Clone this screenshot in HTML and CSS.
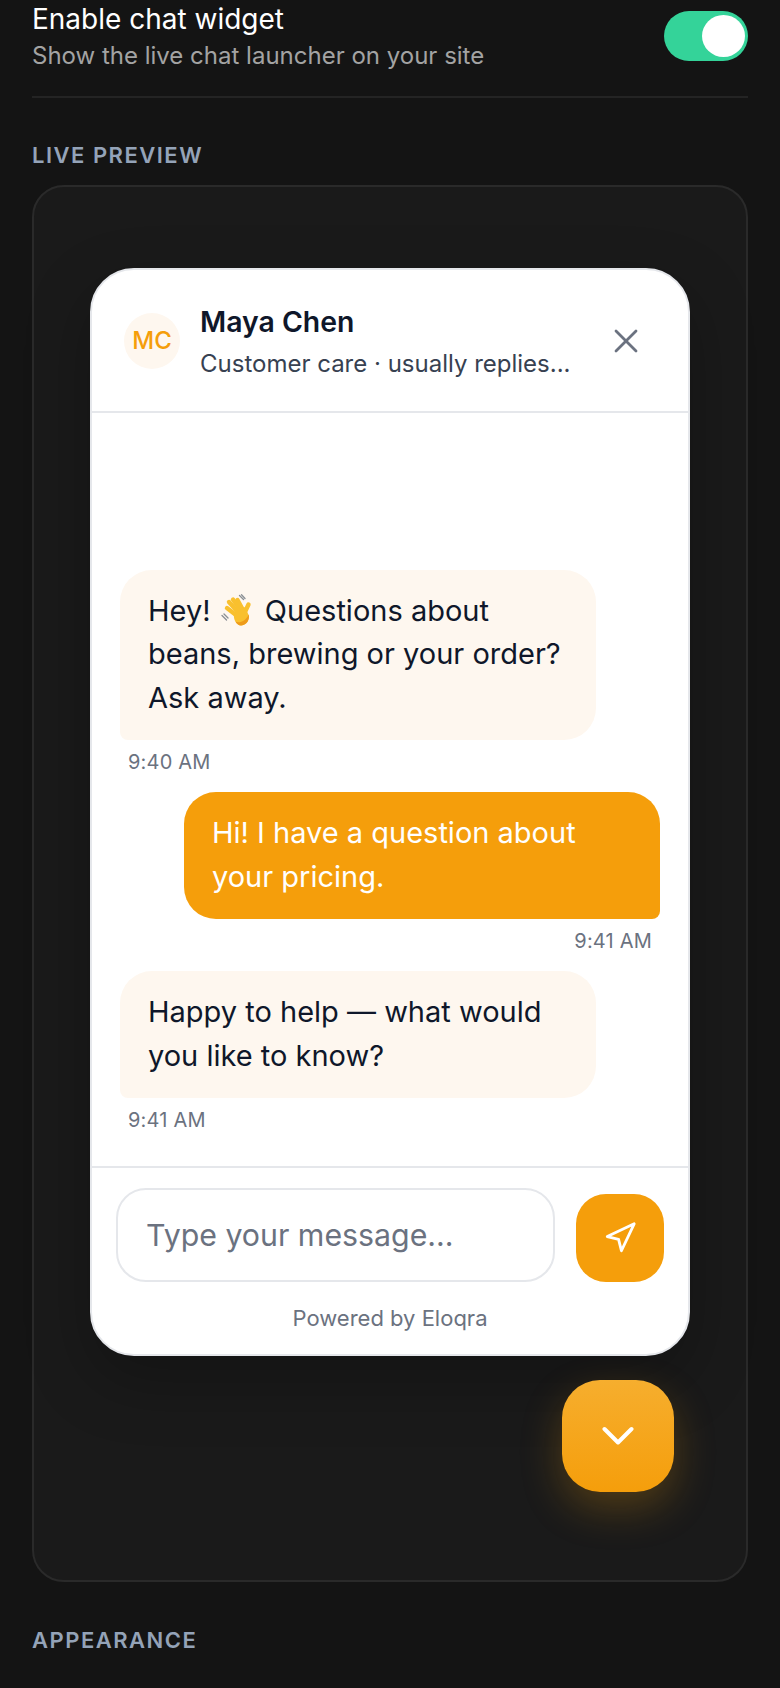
FILE: index.html
```html
<!DOCTYPE html>
<html lang="en">
<head>
    <meta charset="UTF-8">
    <meta name="viewport" content="width=device-width, initial-scale=1.0">
    <title>Chat widget settings</title>
    <link rel="stylesheet" href="styles.css">
</head>
<body>

    <div class="setting-row">
        <div class="setting-text">
            <div class="setting-title">Enable chat widget</div>
            <div class="setting-sub">Show the live chat launcher on your site</div>
        </div>
        <div class="toggle"><div class="toggle-knob"></div></div>
    </div>

    <div class="section-label">LIVE PREVIEW</div>

    <div class="preview">
        <div class="chat-card">
            <div class="chat-header">
                <div class="avatar">MC</div>
                <div class="agent">
                    <div class="agent-name">Maya Chen</div>
                    <div class="agent-role">Customer care · usually replies...</div>
                </div>
                <svg class="close-icon" viewBox="0 0 24 24" fill="none" stroke="#6b7280" stroke-width="2.800" stroke-linecap="round">
                    <path d="M2 2 22 22"/>
                    <path d="M22 2 2 22"/>
                </svg>
            </div>

            <div class="messages">
                <div class="msg msg-in">
                    <div class="bubble">Hey! <svg class="wave" viewBox="0 0 32 32">
                        <g fill="none" stroke="#f9c02e" stroke-width="4.400" stroke-linecap="round">
                            <path d="M6 14 15 21"/>
                            <path d="M8 8 17 18"/>
                            <path d="M12 5.500 20 17"/>
                            <path d="M16.500 6 22 16"/>
                            <path d="M27.500 10.500 23 20"/>
                        </g>
                        <path fill="#f9c02e" d="M13 20 24 13 28 22C28 28 24 31.500 20 31.500 16 31.500 12 26 13 20Z"/>
                        <path fill="#ee9b1b" d="M28 22C28 28 24 31.500 20 31.500 17.500 31.500 15.500 29.500 14.500 27.500 18 29.500 24 28 27.800 20.500Z"/>
                        <path fill="none" stroke="#8a8f94" stroke-width="1.300" stroke-linecap="round" d="M1 21.500 5.500 26M3 20 7 24M18.500 1.500 22.500 5.500M20.500 0.800 24 4.500"/>
                    </svg> Questions about beans, brewing or your order? Ask away.</div>
                    <div class="msg-time">9:40 AM</div>
                </div>
                <div class="msg msg-out">
                    <div class="bubble">Hi! I have a question about your pricing.</div>
                    <div class="msg-time">9:41 AM</div>
                </div>
                <div class="msg msg-in">
                    <div class="bubble">Happy to help — what would you like to know?</div>
                    <div class="msg-time">9:41 AM</div>
                </div>
            </div>

            <div class="chat-footer">
                <div class="composer">
                    <div class="message-input">Type your message...</div>
                    <div class="send-btn">
                        <svg class="send-icon" viewBox="0 0 24 24" fill="none" stroke="#fff" stroke-width="2" stroke-linejoin="round" stroke-linecap="round">
                            <polygon points="3 11 22 2 13 21 11 13 3 11"/>
                        </svg>
                    </div>
                </div>
                <div class="powered">Powered by Eloqra</div>
            </div>
        </div>

        <div class="launcher">
            <svg class="chevron" viewBox="0 0 32 20" fill="none" stroke="#fff" stroke-width="4" stroke-linecap="round" stroke-linejoin="round">
                <path d="M2.500 3 16 16.500 29.500 3"/>
            </svg>
        </div>
    </div>

    <div class="section-label section-label-next">APPEARANCE</div>

</body>
</html>
```

FILE: styles.css
```css
body {
    margin: 0;
    height: 1688px;
    box-sizing: border-box;
    padding: 0 32px;
    background-color: #141414;
    color: white;
    font-family: Inter, "Liberation Sans", sans-serif;
    overflow: hidden;
}

.setting-row {
    display: flex;
    justify-content: space-between;
    align-items: center;
    height: 98px;
    padding-bottom: 24px;
    box-sizing: border-box;
    border-bottom: 2px solid #242424;
}
.setting-title {
    font-size: 28px;
    line-height: 36px;
    color: #ffffff;
}
.setting-sub {
    font-size: 24px;
    line-height: 32px;
    margin-top: 3px;
    color: #a3a3a3;
}

.toggle {
    position: relative;
    width: 84px;
    height: 50px;
    border-radius: 25px;
    background-color: #34d399;
}
.toggle-knob {
    position: absolute;
    top: 4px;
    right: 3px;
    width: 43px;
    height: 42px;
    border-radius: 50%;
    background-color: white;
}

.section-label {
    margin-top: 43px;
    font-size: 22px;
    line-height: 28px;
    font-weight: 600;
    letter-spacing: 1.500px;
    color: #94a3b8;
}
.section-label-next {
    margin-top: 44px;
}

.preview {
    display: flex;
    flex-direction: column;
    margin-top: 16px;
    height: 1397px;
    padding-top: 81px;
    box-sizing: border-box;
    background-color: #1a1a1a;
    border: 2px solid #2a2a2a;
    border-radius: 32px;
}

.chat-card {
    display: flex;
    flex-direction: column;
    align-self: center;
    width: 600px;
    height: 1088px;
    box-sizing: border-box;
    background-color: white;
    border: 2px solid #e5e7eb;
    border-radius: 44px;
    box-shadow: 0 24px 64px rgba(0, 0, 0, 0.25);
    overflow: hidden;
}

.chat-header {
    display: flex;
    align-items: center;
    height: 143px;
    flex-shrink: 0;
    padding: 0 50px 0 32px;
    box-sizing: border-box;
    border-bottom: 2px solid #e5e7eb;
}
.avatar {
    display: flex;
    justify-content: center;
    align-items: center;
    width: 56px;
    height: 56px;
    flex-shrink: 0;
    border-radius: 50%;
    background-color: #fef7ef;
    color: #f59e0b;
    font-size: 24px;
    font-weight: 500;
}
.agent {
    flex: 1;
    margin-left: 20px;
    padding-top: 3px;
}
.agent-name {
    font-size: 28.400px;
    line-height: 36px;
    font-weight: 600;
    color: #0f172a;
}
.agent-role {
    margin-top: 8px;
    font-size: 24px;
    line-height: 32px;
    color: #374151;
}
.close-icon {
    width: 24px;
    height: 24px;
    flex-shrink: 0;
}

.messages {
    flex: 1;
    display: flex;
    flex-direction: column;
    justify-content: flex-end;
    gap: 17px;
    padding: 0 28px 33px 28px;
}
.msg {
    display: flex;
    flex-direction: column;
}
.msg-out {
    align-items: flex-end;
}
.bubble {
    width: 476px;
    box-sizing: border-box;
    padding: 19px 28px 21px;
    font-size: 29px;
    line-height: 43.500px;
}
.msg-in .bubble {
    background-color: #fef7ef;
    color: #0f172a;
    border-radius: 32px 32px 32px 8px;
}
.msg-out .bubble {
    background-color: #f59e0b;
    color: white;
    border-radius: 32px 32px 8px 32px;
}
.wave {
    width: 32px;
    height: 32px;
    vertical-align: -5px;
    margin: 0 4px 0 2px;
}
.msg-time {
    margin: 9px 8px 0;
    font-size: 20px;
    line-height: 26px;
    letter-spacing: 0.200px;
    color: #6b7280;
}

.chat-footer {
    flex-shrink: 0;
    padding: 20px 24px 22px;
    border-top: 2px solid #e5e7eb;
}
.composer {
    display: flex;
    align-items: flex-end;
    gap: 21px;
}
.message-input {
    flex: 1;
    height: 94px;
    box-sizing: border-box;
    padding: 0 28px;
    display: flex;
    align-items: center;
    border: 2px solid #e5e7eb;
    border-radius: 30px;
    font-size: 30.300px;
    color: #6b7280;
}
.send-btn {
    display: flex;
    justify-content: center;
    align-items: center;
    width: 88px;
    height: 88px;
    flex-shrink: 0;
    border-radius: 30px;
    background-color: #f59e0b;
}
.send-icon {
    width: 34px;
    height: 34px;
}
.powered {
    margin-top: 22px;
    text-align: center;
    font-size: 22px;
    line-height: 28px;
    color: #6b7280;
}

.launcher {
    display: flex;
    justify-content: center;
    align-items: center;
    align-self: flex-end;
    margin: 24px 72px 0 0;
    width: 112px;
    height: 112px;
    border-radius: 38px;
    background: linear-gradient(180deg, #f6ae2e, #f59e0b);
    box-shadow: 0 16px 40px rgba(245, 158, 11, 0.25);
}
.chevron {
    width: 32px;
    height: 20px;
}
```
